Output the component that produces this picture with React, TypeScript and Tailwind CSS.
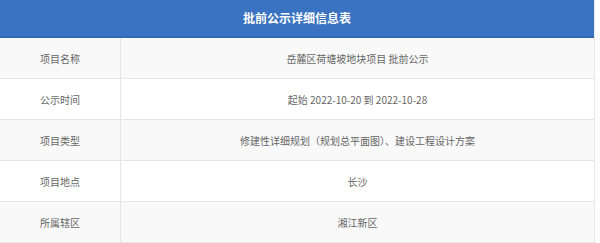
const rows: [string, string][] = [
  ["项目名称", "岳麓区荷塘坡地块项目 批前公示"],
  ["公示时间", "起始 2022-10-20 到 2022-10-28"],
  ["项目类型", "修建性详细规划（规划总平面图）、建设工程设计方案"],
  ["项目地点", "长沙"],
  ["所属辖区", "湘江新区"],
];

export default function App() {
  return (
    <div
      className="w-[600px] h-[243px] overflow-hidden bg-white"
      style={{ fontFamily: '"Microsoft YaHei", "Noto Sans CJK SC", sans-serif' }}
    >
      <div className="w-[595px] border-r border-[#e8e8e8]">
        <div className="h-[38px] bg-[#3a73c1] border-b-2 border-[#3468b0] flex items-center justify-center text-white text-[12px] font-bold">
          批前公示详细信息表
        </div>
        {rows.map(([label, value], i) => (
          <div
            key={label}
            className={`h-[41px] flex border-b border-[#e6e6e6] text-[10px] text-[#666] ${
              i % 2 === 0 ? "bg-[#f9f9f9]" : "bg-white"
            }`}
          >
            <div className="w-[121px] shrink-0 flex items-center justify-center border-r border-[#e6e6e6]">
              {label}
            </div>
            <div className="flex-1 flex items-center justify-center">{value}</div>
          </div>
        ))}
      </div>
    </div>
  );
}
